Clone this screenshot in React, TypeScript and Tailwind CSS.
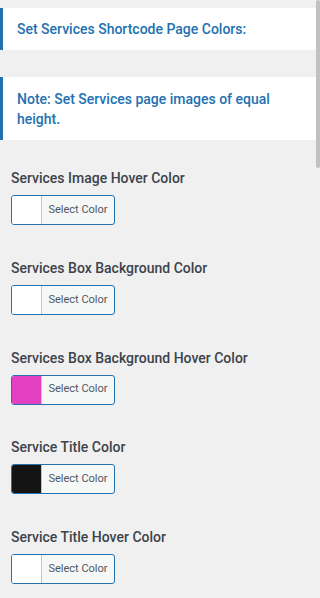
const FIELDS = [
  { label: "Services Image Hover Color", color: "#ffffff" },
  { label: "Services Box Background Color", color: "#ffffff" },
  { label: "Services Box Background Hover Color", color: "#e440c2" },
  { label: "Service Title Color", color: "#141414" },
  { label: "Service Title Hover Color", color: "#ffffff" },
];

function ColorButton({ color }: { color: string }) {
  return (
    <button className="flex h-[30px] w-[104px] overflow-hidden rounded-[3px] border border-[#2271b1] bg-[#f6f7f7]">
      <span className="h-full w-[30px] border-r border-[#c3c4c7]" style={{ backgroundColor: color }} />
      <span className="flex h-full flex-1 items-center justify-center text-[11px] text-[#50575e]">
        Select Color
      </span>
    </button>
  );
}

export default function App() {
  return (
    <div className="relative h-[598px] overflow-hidden bg-[#f0f0f1] pt-2 font-['Roboto',sans-serif]">
      <div className="mr-1 flex h-[42px] items-center border-l-[3px] border-[#2271b1] bg-white pl-[14px]">
        <h2 className="text-[14px] font-medium text-[#2271b1]">Set Services Shortcode Page Colors:</h2>
      </div>
      <div className="mr-1 mt-[27px] flex h-[63px] items-center border-l-[3px] border-[#2271b1] bg-white pl-[14px] pr-4">
        <p className="text-[14px] font-medium leading-[20px] text-[#2271b1]">
          Note: Set Services page images of equal height.
        </p>
      </div>
      <div className="mt-[28px] flex flex-col gap-[32.75px] px-[11px]">
        {FIELDS.map((f) => (
          <div key={f.label}>
            <label className="mb-[7px] block text-[14px] font-medium leading-[20px] text-[#3c434a]">{f.label}</label>
            <ColorButton color={f.color} />
          </div>
        ))}
      </div>
      <div className="absolute right-0 top-0 h-[168px] w-[4px] rounded-sm bg-[#c1c1c1]" />
    </div>
  );
}
